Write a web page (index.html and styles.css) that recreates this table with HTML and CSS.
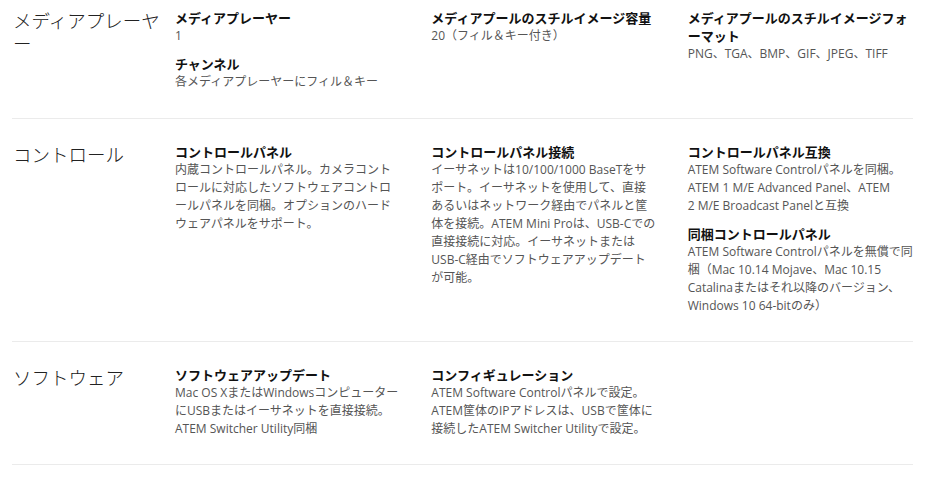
FILE: index.html
```html
<!DOCTYPE html>
<html lang="ja">
<head>
<meta charset="utf-8">
<title>仕様</title>
<link rel="stylesheet" href="styles.css">
</head>
<body>
<div class="specs">
  <section class="row row-first">
    <h2 class="label">メディアプレーヤー</h2>
    <div class="cols">
      <div class="col">
        <div class="item"><h3>メディアプレーヤー</h3><p>1</p></div>
        <div class="item"><h3>チャンネル</h3><p>各メディアプレーヤーにフィル＆キー</p></div>
      </div>
      <div class="col">
        <div class="item"><h3>メディアプールのスチルイメージ容量</h3><p>20（フィル＆キー付き）</p></div>
      </div>
      <div class="col">
        <div class="item"><h3>メディアプールのスチルイメージフォーマット</h3><p>PNG、TGA、BMP、GIF、JPEG、TIFF</p></div>
      </div>
    </div>
  </section>
  <section class="row">
    <h2 class="label">コントロール</h2>
    <div class="cols">
      <div class="col">
        <div class="item"><h3>コントロールパネル</h3><p>内蔵コントロールパネル。カメラコントロールに対応したソフトウェアコントロールパネルを同梱。オプションのハードウェアパネルをサポート。</p></div>
      </div>
      <div class="col">
        <div class="item"><h3>コントロールパネル接続</h3><p>イーサネットは10/100/1000 BaseTをサポート。イーサネットを使用して、直接あるいはネットワーク経由でパネルと筐体を接続。ATEM Mini Proは、USB-Cでの直接接続に対応。イーサネットまたはUSB-C経由でソフトウェアアップデートが可能。</p></div>
      </div>
      <div class="col">
        <div class="item"><h3>コントロールパネル互換</h3><p>ATEM Software Controlパネルを同梱。ATEM 1 M/E Advanced Panel、ATEM<br>2 M/E Broadcast Panelと互換</p></div>
        <div class="item"><h3>同梱コントロールパネル</h3><p>ATEM Software Controlパネルを無償で同梱（Mac 10.14 Mojave、Mac 10.15 Catalinaまたはそれ以降のバージョン、Windows 10 64-bitのみ）</p></div>
      </div>
    </div>
  </section>
  <section class="row">
    <h2 class="label">ソフトウェア</h2>
    <div class="cols">
      <div class="col">
        <div class="item"><h3>ソフトウェアアップデート</h3><p>Mac OS XまたはWindowsコンピューターにUSBまたはイーサネットを直接接続。ATEM Switcher Utility同梱</p></div>
      </div>
      <div class="col">
        <div class="item"><h3>コンフィギュレーション</h3><p>ATEM Software Controlパネルで設定。ATEM筐体のIPアドレスは、USBで筐体に接続したATEM Switcher Utilityで設定。</p></div>
      </div>
      <div class="col"></div>
    </div>
  </section>
</div>
</body>
</html>
```
FILE: styles.css
```css
html, body {
  margin: 0;
  padding: 0;
  background: #ffffff;
}
body {
  font-family: "Open Sans", "Noto Sans CJK JP", sans-serif;
  color: #555555;
}
.specs {
  width: 901px;
  margin-left: 12px;
}
.row {
  display: grid;
  grid-template-columns: 163px 1fr;
  padding: 24px 0 26px;
  border-bottom: 1px solid #ebebeb;
}
.row-first {
  padding-top: 9px;
  padding-bottom: 27px;
}
.label {
  margin: 0;
  padding-left: 1px;
  padding-right: 10px;
  font-size: 18.5px;
  line-height: 23px;
  font-weight: 300;
  color: #222222;
}
.cols {
  display: grid;
  grid-template-columns: repeat(3, 1fr);
  column-gap: 31px;
}
.item + .item {
  margin-top: 10px;
}
.item h3 {
  margin: 0;
  font-size: 13px;
  line-height: 18px;
  font-weight: 700;
  color: #111111;
}
.item p {
  margin: 0;
  font-size: 12px;
  line-height: 18px;
  color: #555555;
}
```
